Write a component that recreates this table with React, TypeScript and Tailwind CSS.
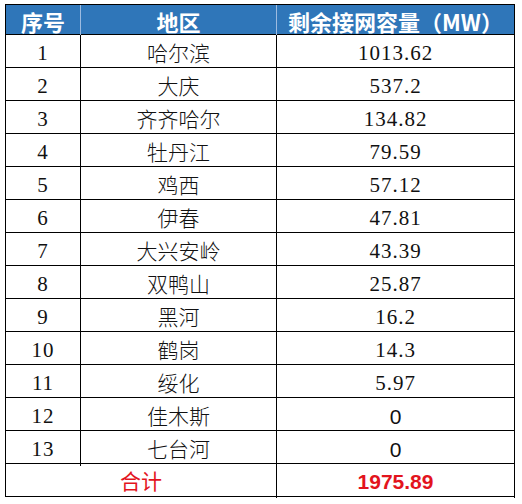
const rows: [string, string, string][] = [
  ['1', '哈尔滨', '1013.62'],
  ['2', '大庆', '537.2'],
  ['3', '齐齐哈尔', '134.82'],
  ['4', '牡丹江', '79.59'],
  ['5', '鸡西', '57.12'],
  ['6', '伊春', '47.81'],
  ['7', '大兴安岭', '43.39'],
  ['8', '双鸭山', '25.87'],
  ['9', '黑河', '16.2'],
  ['10', '鹤岗', '14.3'],
  ['11', '绥化', '5.97'],
  ['12', '佳木斯', '0'],
  ['13', '七台河', '0'],
]

const serif = "font-['Liberation_Serif','Noto_Sans_CJK_SC',serif]"
const cjk = "font-['Noto_Sans_CJK_SC',sans-serif]"

const App = () => {
  return (
    <div className="w-[522px] h-[504px] bg-white pt-[4px] pl-[5px]">
      <div className="w-[510px] border-l border-t border-black">
        {/* header */}
        <div className="grid grid-cols-[75px_196px_238px] h-[30px] bg-[#2f76b9] text-white font-bold text-[22px] border-b border-black">
          <div className={`flex items-center justify-center border-r border-[#9dbbe0] ${cjk}`}>序号</div>
          <div className={`flex items-center justify-center border-r border-[#9dbbe0] ${cjk}`}>地区</div>
          <div className={`flex items-center justify-center border-r border-black ${cjk}`}>剩余接网容量（MW）</div>
        </div>

        {rows.map((r, index) => {
          const zero = r[2] === '0'
          return (
            <div key={index} className="grid grid-cols-[75px_196px_238px] h-[33px] border-b border-black text-[#111]">
              <div className={`flex items-center justify-center border-r border-black text-[21px] tracking-[1px] pt-[3px] ${serif}`}>{r[0]}</div>
              <div className={`flex items-center justify-center border-r border-black text-[21px] font-light pt-[1px] ${cjk}`}>{r[1]}</div>
              {zero ? (
                <div className="flex items-center justify-center border-r border-black text-[21px] pt-[2px] font-['Liberation_Sans',sans-serif]">{r[2]}</div>
              ) : (
                <div className={`flex items-center justify-center border-r border-black text-[21px] tracking-[1px] pt-[3px] ${serif}`}>{r[2]}</div>
              )}
            </div>
          )
        })}

        {/* total */}
        <div className="grid grid-cols-[271px_238px] h-[33px] border-b border-black text-[#e3141d]">
          <div className={`flex items-center justify-center border-r border-black text-[21px] ${cjk}`}>合计</div>
          <div className="flex items-center justify-center border-r border-black text-[21px] font-bold pt-[2px] font-['Liberation_Sans',sans-serif]">1975.89</div>
        </div>
      </div>
    </div>
  )
}

export default App
